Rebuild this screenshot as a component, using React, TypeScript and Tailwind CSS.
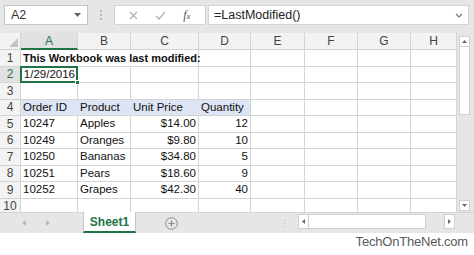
import React from 'react';

const cols = ['A', 'B', 'C', 'D', 'E', 'F', 'G', 'H'];
const widths = ['w-[57px]', 'w-[53px]', 'w-[68px]', 'w-[52px]', 'w-[54px]', 'w-[53px]', 'w-[53px]', 'w-[46px]'];

type Cell = { t?: string; right?: boolean; bold?: boolean; span?: number };

const data: Record<number, Cell[]> = {
  1: [{ t: 'This Workbook was last modified:', bold: true, span: 3 }],
  2: [{ t: '1/29/2016', right: true }],
  4: [{ t: 'Order ID' }, { t: 'Product' }, { t: 'Unit Price' }, { t: 'Quantity' }],
  5: [{ t: '10247' }, { t: 'Apples' }, { t: '$14.00', right: true }, { t: '12', right: true }],
  6: [{ t: '10249' }, { t: 'Oranges' }, { t: '$9.80', right: true }, { t: '10', right: true }],
  7: [{ t: '10250' }, { t: 'Bananas' }, { t: '$34.80', right: true }, { t: '5', right: true }],
  8: [{ t: '10251' }, { t: 'Pears' }, { t: '$18.60', right: true }, { t: '9', right: true }],
  9: [{ t: '10252' }, { t: 'Grapes' }, { t: '$42.30', right: true }, { t: '40', right: true }],
};

function Row({ n }: { n: number }) {
  const cells = data[n] || [];
  const blue = n === 4;
  return (
    <div className="flex h-[16.5px]">
      <div
        className={`w-[21px] shrink-0 flex items-center justify-center border-r border-b border-[#d4d4d4] text-[12px] ${
          n === 2 ? 'bg-[#e1e1e1] text-[#217346]' : 'bg-[#f3f3f3] text-[#444]'
        }`}
      >
        {n}
      </div>
      {widths.map((w, i) => {
        const c = cells[i];
        const isBlue = blue && i < 4;
        const selected = n === 2 && i === 0;
        return (
          <div
            key={i}
            className={`${w} shrink-0 relative flex items-center px-[2px] border-b ${
              isBlue ? 'bg-[#dde4f4] border-[#d4d4d4]' : 'bg-white border-[#d4d4d4]'
            } ${isBlue && i < 3 ? 'border-r border-r-[#dde4f4]' : 'border-r border-r-[#d4d4d4]'} ${
              n === 1 && i < 2 ? 'border-r-white' : ''
            } ${c?.right ? 'justify-end' : 'justify-start'}`}
          >
            {c?.t && (
              <span
                className={`whitespace-nowrap leading-none text-[#111] ${c.bold ? 'font-bold text-[11px]' : 'text-[11.5px]'} ${
                  c.span ? 'absolute left-[2px] top-1/2 -translate-y-1/2 z-10' : ''
                }`}
              >
                {c.t}
              </span>
            )}
            {selected && (
              <>
                <div className="absolute -left-px -top-px right-[-1px] bottom-[-1px] border-2 border-[#217346] pointer-events-none" />
                <div className="absolute right-[-3px] bottom-[-3px] w-[5px] h-[5px] bg-[#217346] border border-white z-10" />
              </>
            )}
          </div>
        );
      })}
    </div>
  );
}

export default function App() {
  return (
    <div className="w-[474px] h-[255px] bg-white overflow-hidden flex flex-col" style={{ fontFamily: '"Liberation Sans", Arial, sans-serif' }}>
      {/* Formula bar */}
      <div className="h-[33px] shrink-0 bg-[#e6e6e6] flex items-start pt-[5px] pl-[4px] pr-[5px]">
        <div className="w-[84px] h-[20px] bg-white border border-[#c6c6c6] flex items-center justify-between px-[6px] text-[12.5px] text-[#333]">
          <span>A2</span>
          <svg width="7" height="4" viewBox="0 0 7 4"><path d="M0 0h7L3.5 4z" fill="#666" /></svg>
        </div>
        <div className="w-[26px] h-[20px] flex flex-col items-center justify-center gap-[2px]">
          <div className="w-[2px] h-[2px] bg-[#b5b5b5]" />
          <div className="w-[2px] h-[2px] bg-[#b5b5b5]" />
          <div className="w-[2px] h-[2px] bg-[#b5b5b5]" />
        </div>
        <div className="w-[92px] h-[20px] bg-white border border-[#d4d4d4] flex items-center justify-around px-[6px]">
          <svg width="9" height="9" viewBox="0 0 9 9"><path d="M1 1l7 7M8 1L1 8" stroke="#b0b0b0" strokeWidth="1.2" /></svg>
          <svg width="11" height="9" viewBox="0 0 11 9"><path d="M1 5l3 3 6-7" stroke="#b0b0b0" strokeWidth="1.2" fill="none" /></svg>
          <span className="text-[12px] italic text-[#555]" style={{ fontFamily: '"Liberation Serif", serif' }}>
            f<span className="text-[9px]">x</span>
          </span>
        </div>
        <div className="flex-1 ml-[2px] h-[20px] bg-white border border-[#d4d4d4] flex items-center justify-between pl-[5px] pr-[5px] text-[12.5px] text-[#222]">
          <span>=LastModified()</span>
          <svg width="8" height="5" viewBox="0 0 8 5"><path d="M1 1l3 3 3-3" stroke="#777" strokeWidth="1.2" fill="none" /></svg>
        </div>
      </div>

      {/* Grid */}
      <div className="flex h-[179px] shrink-0 overflow-hidden">
        <div className="w-[457px] shrink-0 flex flex-col">
          <div className="flex h-[17px] shrink-0 bg-[#f3f3f3]">
            <div className="w-[21px] shrink-0 relative border-r border-b border-[#d4d4d4]">
              <svg className="absolute right-[2px] bottom-[2px]" width="9" height="9" viewBox="0 0 9 9"><path d="M9 0v9H0z" fill="#c4c4c4" /></svg>
            </div>
            {cols.map((c, i) => (
              <div
                key={c}
                className={`${widths[i]} shrink-0 flex items-center justify-center text-[12px] border-r border-[#d4d4d4] ${
                  i === 0 ? 'bg-[#e1e1e1] text-[#217346] border-b-2 border-b-[#217346]' : 'text-[#444] border-b border-b-[#d4d4d4]'
                }`}
              >
                {c}
              </div>
            ))}
          </div>
          {[1, 2, 3, 4, 5, 6, 7, 8, 9, 10].map((n) => (
            <Row key={n} n={n} />
          ))}
        </div>
        {/* Vertical scrollbar */}
        <div className="flex-1 bg-[#e6e6e6] pl-[2px] pr-[4px] pt-[3px] flex flex-col">
          <div className="h-[11px] bg-white border border-[#d0d0d0] flex items-center justify-center">
            <svg width="5" height="3" viewBox="0 0 5 3"><path d="M0 3h5L2.5 0z" fill="#666" /></svg>
          </div>
          <div className="h-[68px] bg-white border border-[#d0d0d0] border-t-0" />
          <div className="flex-1" />
          <div className="h-[11px] bg-white border border-[#d0d0d0] flex items-center justify-center mb-[1px]">
            <svg width="5" height="3" viewBox="0 0 5 3"><path d="M0 0h5L2.5 3z" fill="#666" /></svg>
          </div>
        </div>
      </div>

      {/* Sheet tabs bar */}
      <div className="h-[21px] shrink-0 bg-[#e6e6e6] border-t border-[#d4d4d4] flex items-stretch">
        <div className="w-[83px] flex items-center pl-[22px] gap-[20px]">
          <svg width="4" height="6" viewBox="0 0 4 6"><path d="M4 0v6L0 3z" fill="#bbb" /></svg>
          <svg width="4" height="6" viewBox="0 0 4 6"><path d="M0 0v6l4-3z" fill="#bbb" /></svg>
        </div>
        <div className="w-[53px] bg-white border-x border-[#c6c6c6] border-b-2 border-b-[#217346] flex items-center justify-center text-[12px] font-bold text-[#217346] -mt-px">
          Sheet1
        </div>
        <div className="w-[70px] flex items-center justify-center">
          <svg width="13" height="13" viewBox="0 0 13 13">
            <circle cx="6.5" cy="6.5" r="5.8" stroke="#8a8a8a" strokeWidth="1" fill="none" />
            <path d="M6.5 3.5v6M3.5 6.5h6" stroke="#8a8a8a" strokeWidth="1.2" />
          </svg>
        </div>
        <div className="w-[80px] flex items-center justify-end pr-[1px]">
          <div className="flex flex-col gap-[2px]">
            <div className="w-[1px] h-[1px] bg-[#b5b5b5]" />
            <div className="w-[1px] h-[1px] bg-[#b5b5b5]" />
            <div className="w-[1px] h-[1px] bg-[#b5b5b5]" />
          </div>
        </div>
        <div className="flex-1 flex items-start pt-[1px] pl-[12px] pr-[19px]">
          <div className="h-[15px] w-[11px] bg-white border border-[#d0d0d0] flex items-center justify-center">
            <svg width="3" height="5" viewBox="0 0 3 5"><path d="M3 0v5L0 2.5z" fill="#666" /></svg>
          </div>
          <div className="h-[15px] w-[117px] bg-white border border-[#d0d0d0] border-l-0" />
          <div className="flex-1" />
          <div className="h-[15px] w-[11px] bg-white border border-[#d0d0d0] flex items-center justify-center">
            <svg width="3" height="5" viewBox="0 0 3 5"><path d="M0 0v5l3-2.5z" fill="#666" /></svg>
          </div>
        </div>
      </div>

      {/* Watermark */}
      <div className="flex-1 flex justify-end items-start pr-[6px] pt-0">
        <span className="text-[13px] leading-[18px] text-[#5a5a5a] tracking-[-0.2px]">TechOnTheNet.com</span>
      </div>
    </div>
  );
}
